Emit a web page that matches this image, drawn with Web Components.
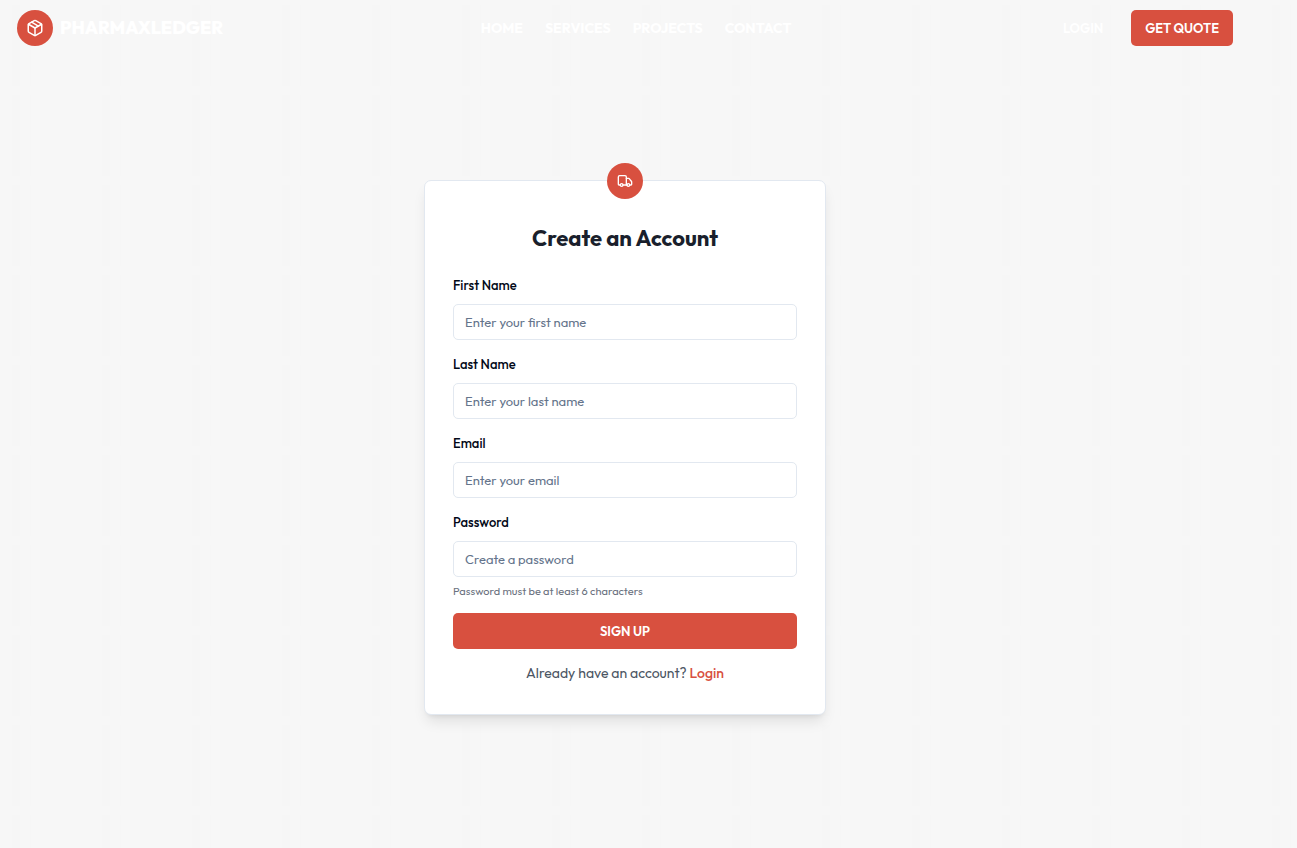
<!DOCTYPE html>
<html lang="en">
<head>
<meta charset="utf-8">
<meta name="viewport" content="width=device-width, initial-scale=1">
<title>PharmaXLedger – Create an Account</title>
<style>
  html, body { margin: 0; min-height: 100%; }
  body {
    font-family: Outfit, Lato, "Open Sans", sans-serif;
    --accent: #d8503f;
    --border: #e2e8f0;
    background-color: #f7f7f7;
  }
</style>
</head>
<body>
<signup-page></signup-page>

<template id="t-page">
  <style>
    :host {
      display: block;
      box-sizing: border-box;
      min-height: 100vh;
      padding-right: 47px;
      background-image:
        linear-gradient(#f7f7f7 9px, transparent 9px),
        linear-gradient(90deg, #f6f6f6 8px, transparent 8px),
        linear-gradient(90deg, #f6f6f6 1px, transparent 1px),
        linear-gradient(#f6f6f6 1px, transparent 1px);
      background-size: 90px 90px, 90px 90px, 90px 90px, 90px 90px;
      background-position: 0 86px, 12px 0, 30px 0, 0 86px;
    }
    main { display: flex; justify-content: center; padding: 124px 16px 64px; }
  </style>
  <site-header></site-header>
  <main><signup-card></signup-card></main>
</template>

<template id="t-badge">
  <style>
    :host {
      display: flex; align-items: center; justify-content: center;
      width: 36px; height: 36px; border-radius: 50%;
      background: var(--accent); color: #fff; flex: none;
    }
  </style>
  <slot></slot>
</template>

<template id="t-button">
  <style>
    :host { display: block; }
    button {
      width: 100%; height: 36px; padding: 0 14px; border: 0; border-radius: 5px;
      background: var(--accent); color: #fff; cursor: pointer;
      font: 600 13px/20px Outfit, Lato, sans-serif; white-space: nowrap;
    }
    :host([plain]) button { background: transparent; }
  </style>
  <button type="button"><slot></slot></button>
</template>

<template id="t-header">
  <style>
    :host { display: block; }
    header { display: flex; align-items: center; justify-content: space-between; padding: 10px 17px; }
    .brand { display: flex; align-items: center; gap: 7px; color: #fff; text-decoration: none; font: 800 18px/28px Outfit, Lato, sans-serif; }
    nav { display: flex; gap: 22px; }
    nav a { color: #fff; text-decoration: none; font-size: 14px; line-height: 20px; font-weight: 700; }
    .actions { display: flex; gap: 14px; }
    svg { display: block; }
  </style>
  <header>
    <a class="brand" href="#">
      <round-badge>
        <svg width="18" height="18" viewBox="0 0 24 24" fill="none" stroke="currentColor" stroke-width="2" stroke-linecap="round" stroke-linejoin="round" aria-hidden="true">
          <path d="m7.5 4.27 9 5.15"/>
          <path d="M21 8a2 2 0 0 0-1-1.73l-7-4a2 2 0 0 0-2 0l-7 4A2 2 0 0 0 3 8v8a2 2 0 0 0 1 1.73l7 4a2 2 0 0 0 2 0l7-4A2 2 0 0 0 21 16Z"/>
          <path d="m3.3 7 8.7 5 8.7-5"/><path d="M12 22V12"/>
        </svg>
      </round-badge>
      <span>PHARMAXLEDGER</span>
    </a>
    <nav>
      <a href="#">HOME</a><a href="#">SERVICES</a><a href="#">PROJECTS</a><a href="#">CONTACT</a>
    </nav>
    <div class="actions">
      <action-button plain>LOGIN</action-button>
      <action-button>GET QUOTE</action-button>
    </div>
  </header>
</template>

<template id="t-field">
  <style>
    :host { display: block; }
    label { display: block; margin-bottom: 9px; color: #020817; font-size: 13px; line-height: 20px; font-weight: 500; }
    input {
      display: block; box-sizing: border-box; width: 100%; height: 36px; padding: 0 11px;
      border: 1px solid var(--border); border-radius: 5px; background: #fff; color: #020817;
      font: 400 13px/20px Outfit, Lato, sans-serif;
    }
    input::placeholder { color: #64748b; opacity: 1; }
  </style>
  <label for="control"></label>
  <input id="control">
</template>

<template id="t-card">
  <style>
    :host {
      display: block; box-sizing: border-box; position: relative;
      width: 100%; max-width: 402px; padding: 42px 28px 31px;
      border: 1px solid var(--border); border-radius: 7px; background: #fff;
      box-shadow: 0 9px 14px -3px rgba(0,0,0,.1), 0 4px 5px -4px rgba(0,0,0,.1);
    }
    round-badge { position: absolute; top: -18px; left: 50%; margin-left: -18px; }
    h1 { margin: 0 0 22px; text-align: center; color: #1a1f2c; font-size: 22px; line-height: 30px; font-weight: 700; }
    form { display: flex; flex-direction: column; gap: 14px; }
    .hint { margin: 6px 0 0; color: #6b7280; font-size: 11px; line-height: 16px; }
    .switch { margin: 0; text-align: center; color: #4b5563; font-size: 14px; line-height: 20px; }
    .switch a { color: var(--accent); font-weight: 500; text-decoration: none; }
    svg { display: block; }
  </style>
  <round-badge>
    <svg width="16" height="16" viewBox="0 0 24 24" fill="none" stroke="currentColor" stroke-width="2" stroke-linecap="round" stroke-linejoin="round" aria-hidden="true">
      <path d="M14 18V6a2 2 0 0 0-2-2H4a2 2 0 0 0-2 2v11a1 1 0 0 0 1 1h2"/>
      <path d="M15 18H9"/>
      <path d="M19 18h2a1 1 0 0 0 1-1v-3.65a1 1 0 0 0-.22-.624l-3.48-4.35A1 1 0 0 0 17.52 8H14"/>
      <circle cx="17" cy="18" r="2"/><circle cx="7" cy="18" r="2"/>
    </svg>
  </round-badge>
  <h1>Create an Account</h1>
  <form>
    <form-field label="First Name" placeholder="Enter your first name"></form-field>
    <form-field label="Last Name" placeholder="Enter your last name"></form-field>
    <form-field label="Email" type="email" placeholder="Enter your email"></form-field>
    <div>
      <form-field label="Password" type="password" placeholder="Create a password"></form-field>
      <p class="hint">Password must be at least 6 characters</p>
    </div>
    <action-button>SIGN UP</action-button>
    <p class="switch">Already have an account? <a href="#">Login</a></p>
  </form>
</template>

<script>
  class TemplateElement extends HTMLElement {
    constructor() {
      super();
      this.attachShadow({ mode: "open" })
        .append(document.getElementById(this.constructor.template).content.cloneNode(true));
    }
  }
  class RoundBadge extends TemplateElement { static template = "t-badge"; }
  class ActionButton extends TemplateElement { static template = "t-button"; }
  class FormField extends TemplateElement {
    static template = "t-field";
    connectedCallback() {
      const input = this.shadowRoot.querySelector("input");
      this.shadowRoot.querySelector("label").textContent = this.getAttribute("label");
      input.type = this.getAttribute("type") || "text";
      input.placeholder = this.getAttribute("placeholder");
    }
  }
  class SiteHeader extends TemplateElement { static template = "t-header"; }
  class SignupCard extends TemplateElement { static template = "t-card"; }
  class SignupPage extends TemplateElement { static template = "t-page"; }
  customElements.define("round-badge", RoundBadge);
  customElements.define("action-button", ActionButton);
  customElements.define("form-field", FormField);
  customElements.define("site-header", SiteHeader);
  customElements.define("signup-card", SignupCard);
  customElements.define("signup-page", SignupPage);
</script>
</body>
</html>
